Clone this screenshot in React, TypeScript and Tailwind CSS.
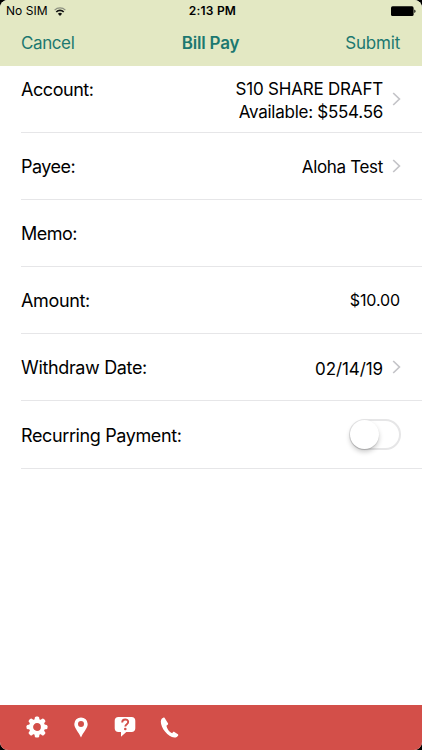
import type { ReactNode } from "react";

interface Field {
  label: string;
  labelClass: string;
  lines?: { text: string; className: string }[];
  chevron?: boolean;
  toggle?: boolean;
}

const fields: Field[] = [
  {
    label: "Account:",
    labelClass: "self-start mt-[12px] tracking-[-0.45px]",
    lines: [
      { text: "S10 SHARE DRAFT", className: "pt-[2px] tracking-[-0.2px]" },
      { text: "Available: $554.56", className: "tracking-[-0.26px]" },
    ],
    chevron: true,
  },
  {
    label: "Payee:",
    labelClass: "pt-px tracking-[-0.5px]",
    lines: [{ text: "Aloha Test", className: "tracking-[-0.33px]" }],
    chevron: true,
  },
  { label: "Memo:", labelClass: "pt-px tracking-[-0.5px]" },
  {
    label: "Amount:",
    labelClass: "tracking-[-0.35px]",
    lines: [{ text: "$10.00", className: "-mt-[3px] mr-px text-[16px] tracking-[-0.1px]" }],
  },
  {
    label: "Withdraw Date:",
    labelClass: "pt-px tracking-[-0.35px]",
    lines: [{ text: "02/14/19", className: "pt-px tracking-[-0.1px]" }],
    chevron: true,
  },
  {
    label: "Recurring Payment:",
    labelClass: "pt-px tracking-[-0.38px]",
    toggle: true,
  },
];

const gearTeeth = [0, 45, 90, 135, 180, 225, 270, 315];

function WifiIcon() {
  return (
    <svg width="12" height="9" viewBox="0 0 12 9" fill="none" stroke="#111">
      <path d="M.6 3.1a7.7 7.7 0 0 1 10.8 0" stroke="#8d9180" strokeWidth="1.2" />
      <path d="M2.3 5a5.2 5.2 0 0 1 7.4 0" strokeWidth="1.7" />
      <path d="M6 9 3.9 6.8a3 3 0 0 1 4.2 0z" fill="#111" stroke="none" />
    </svg>
  );
}

function BatteryIcon() {
  return (
    <svg width="25" height="11" viewBox="0 0 25 11">
      <rect x="0" y="0.3" width="22.6" height="9.8" rx="1.6" />
      <path d="M23.3 3.6c1.7.5 1.7 3 0 3.5z" />
    </svg>
  );
}

function Chevron() {
  return (
    <svg width="9" height="14" viewBox="0 0 9 14" fill="none" stroke="#c4c4c8" strokeWidth="1.7">
      <path d="M1.2 1 7.4 7l-6.2 6" />
    </svg>
  );
}

function Toggle() {
  return (
    <div className="flex h-[31px] w-[52px] items-center rounded-full border-[2px] border-[#e6e6e7] bg-white">
      <div className="-ml-px h-[29px] w-[29px] shrink-0 rounded-full bg-white shadow-[0_3px_5px_rgba(0,0,0,0.2),0_1px_1px_rgba(0,0,0,0.12)]" />
    </div>
  );
}

function FooterButton({ label, children }: { label: string; children: ReactNode }) {
  return (
    <button aria-label={label} className="flex h-6 w-[44px] items-center justify-center">
      {children}
    </button>
  );
}

export default function App() {
  return (
    <div className="h-[750px] w-[422px] bg-black font-['Inter',sans-serif] text-black">
      <div className="flex h-full flex-col overflow-hidden rounded-[8px] bg-white">
        <header className="h-[65.5px] bg-[#e3e8c3]">
          {/* Status bar */}
          <div className="grid h-[22px] grid-cols-3 items-center pr-[6px] pl-[6px] text-[12px]">
            <div className="flex items-center gap-[6px]">
              <span className="tracking-[0.05px]">No SIM</span>
              <WifiIcon />
            </div>
            <span className="pl-[3px] text-center font-semibold tracking-[0.2px]">2:13 PM</span>
            <div className="flex justify-end">
              <BatteryIcon />
            </div>
          </div>
          {/* Navigation */}
          <div className="grid h-[43px] grid-cols-3 items-center pr-[22px] pl-[21px] text-[17px] text-[#1c7870]">
            <button className="text-left tracking-[-0.4px]">Cancel</button>
            <h1 className="text-center font-semibold tracking-[-0.2px]">Bill Pay</h1>
            <button className="text-right tracking-[-0.2px]">Submit</button>
          </div>
        </header>

        <main className="flex-1 pl-[21px]">
          {fields.map((field) => (
            <div
              key={field.label}
              className="flex h-[67.2px] items-center border-b border-[#e6e6e8] pr-[21px] text-[18px] leading-[23px]"
            >
              <span className={field.labelClass}>{field.label}</span>
              <div className="ml-auto flex items-center gap-[9px]">
                {field.lines && (
                  <div className="pt-[3px] text-right text-[17px]">
                    {field.lines.map((line) => (
                      <p key={line.text} className={line.className}>
                        {line.text}
                      </p>
                    ))}
                  </div>
                )}
                {field.chevron && <Chevron />}
                {field.toggle && <Toggle />}
              </div>
            </div>
          ))}
        </main>

        <footer className="flex h-[45px] items-center bg-[#d34f49] pb-px pl-[15px]">
          <FooterButton label="Settings">
            <svg width="22" height="22" viewBox="0 0 22 22" fill="white">
              {gearTeeth.map((angle) => (
                <rect
                  key={angle}
                  x="8.7"
                  y="0.5"
                  width="4.6"
                  height="6"
                  rx="1.6"
                  transform={`rotate(${angle} 11 11)`}
                />
              ))}
              <circle cx="11" cy="11" r="6" fill="none" stroke="white" strokeWidth="4.2" />
            </svg>
          </FooterButton>
          <FooterButton label="Locations">
            <svg width="14" height="21" viewBox="0 0 14 21" fill="white">
              <path
                fillRule="evenodd"
                d="M7 .4A6.7 6.7 0 0 0 .3 7.1C.3 11.5 5 15.5 7 20.6 9 15.5 13.7 11.5 13.7 7.1A6.7 6.7 0 0 0 7 .4zm0 3.7a3 3 0 1 1 0 6 3 3 0 0 1 0-6z"
              />
            </svg>
          </FooterButton>
          <FooterButton label="Help">
            <svg width="22" height="20" viewBox="0 0 22 20" fill="none">
              <path
                fill="white"
                d="M4.5 0h13C20 0 21.3 1.5 21.3 3.8v7.5c0 2.4-1.3 3.7-3.8 3.700h-5.200L7 19.700V15H4.500C2 15 .7 13.700.7 11.300V3.800C.7 1.500 2 0 4.500 0z"
              />
              <path
                d="M8.200 5.400c0-3.900 6-3.900 6-.3 0 2.300-2.900 2-2.900 4.500"
                stroke="#d34f49"
                strokeWidth="1.900"
              />
              <circle cx="11.300" cy="12" r="1.300" fill="#d34f49" />
            </svg>
          </FooterButton>
          <FooterButton label="Call">
            <svg width="19" height="21" viewBox="0 0 19 21" fill="white">
              <path d="M3.700.6C2.300.9.8 2.300.8 4.600c0 6.700 7.300 15.600 13.500 15.900 1.800.1 3.200-.8 3.900-2.100.2-.5.1-.9-.3-1.200l-3.500-2.300c-.5-.3-1-.2-1.300.2l-1 1.200c-3-1.500-5-4.500-5.700-7.600l1.300-.9c.4-.3.5-.8.4-1.300L5 1.400C4.800.8 4.300.5 3.700.6z" />
            </svg>
          </FooterButton>
        </footer>
      </div>
    </div>
  );
}
